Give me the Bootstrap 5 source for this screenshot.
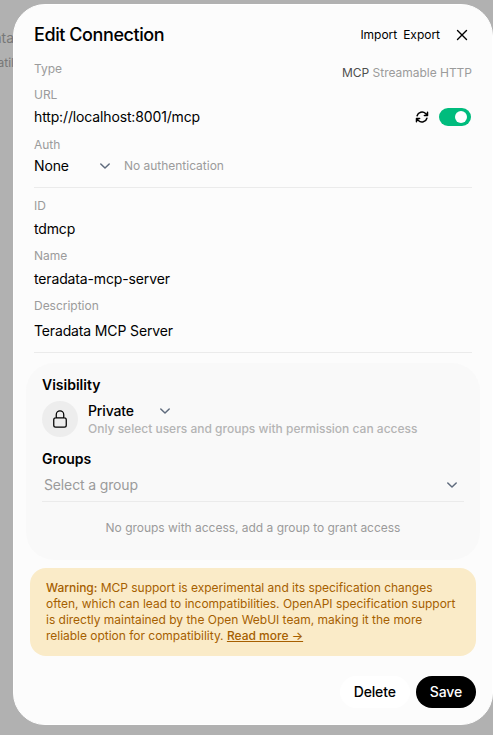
<!DOCTYPE html>
<html lang="en">
<head>
<meta charset="utf-8">
<meta name="viewport" content="width=device-width, initial-scale=1">
<title>Edit Connection</title>
<link href="https://cdn.jsdelivr.net/npm/bootstrap@5.3.0/dist/css/bootstrap.min.css" rel="stylesheet">
<style>
body{font-family:Inter,"Liberation Sans",sans-serif;font-size:14px;line-height:20px;letter-spacing:-.14px;color:#000;background:#b1b1b1;width:493px;height:735px}
svg{display:block;fill:none;stroke:currentColor;stroke-linecap:round;stroke-linejoin:round}
.behind{left:0;width:14px;color:#777;white-space:nowrap;direction:rtl;letter-spacing:0}
.behind-a{top:28px;font-size:14px}
.behind-b{top:53px;font-size:12px}
.dialog{margin:4px 0 0 13px;width:480px;height:721px;border:1px solid #fff;border-radius:32px;background:#fcfcfc}
.inner{padding:0 20px}
.head{padding-top:18px;height:56px}
.title{font-size:18px;line-height:24px;font-weight:500;letter-spacing:-.42px}
.txt12,.lbl{font-size:12px;line-height:16px;letter-spacing:-.02px}
.lbl{color:#9b9b9b}
.exp{margin-left:6px}
.dark{color:#4e4e4e}
.soft{color:#b4b4b4;letter-spacing:0}
.hair{height:1px;background:#ebebeb}
.arrow{color:#5f6b7d}
.toggle{width:32px;height:18px;background:#00bc7d;padding:3px 4px;margin-right:1px}
.knob{width:12px;height:12px}
.type-row{height:26px}
.url-row{height:27px}
.reload{margin-right:10px}
.auth-lbl{margin-top:7px}
.auth-row{margin-top:3px}
.none{width:90px;padding-right:13px}
.first-hair{margin-top:11px}
.fields{padding:10px 0 3px}
.field-gap{margin-top:9px}
.v1{margin-top:5px}
.v2{margin-top:7px}
.access{margin:10px 12px 0;height:197px;border-radius:28px;background:#f9f9f9;padding:12px 16px 0}
.strong14{font-weight:600;letter-spacing:0}
.who-row{margin-top:6px}
.who{margin-left:10px}
.who .arrow{margin-left:25px}
.lock{width:36px;height:36px;background:#ededed}
.groups{margin-top:12px}
.picker{height:29px;margin-top:3px;color:#9b9b9b;padding:0 6px 3px 2px}
.empty{margin-top:18px}
.warn{margin:8px 16px 0;padding:12px 16px;border-radius:16px;background:#faebc8;color:#a65f00}
.warn a{color:inherit;letter-spacing:0}
.actions{margin:20px 16px 0;gap:6px}
.pill{height:32px;font-size:14px;line-height:20px;font-weight:500;letter-spacing:-.14px;border:0;padding:6px 14px}
</style>
</head>
<body class="position-relative overflow-hidden">
<div class="behind behind-a position-absolute overflow-hidden">ata</div>
<div class="behind behind-b position-absolute overflow-hidden">atil</div>
<main class="dialog position-relative">
  <div class="inner">
    <header class="head d-flex justify-content-between">
      <h1 class="title mb-0">Edit Connection</h1>
      <div class="d-flex txt12 align-items-center align-self-start mt-1">
        <span>Import</span><span class="exp">Export</span>
        <svg class="ms-3 me-1" width="12" height="12" viewBox="0 0 12 12" stroke-width="1.4"><path d="M1.5 1.5l9 9M10.5 1.5l-9 9"/></svg>
      </div>
    </header>
    <div class="type-row d-flex justify-content-between txt12">
      <span class="lbl">Type</span>
      <span class="mt-1 lbl"><span class="dark">MCP</span> Streamable HTTP</span>
    </div>
    <div class="lbl">URL</div>
    <div class="d-flex align-items-center url-row">
      <span class="flex-grow-1">http://localhost:8001/mcp</span>
      <svg class="reload" width="14" height="14" viewBox="0 0 16 16" stroke-width="1.7"><path d="M10.7 6.2h3.6V2.6M1.7 13.4V9.8h3.6M2.4 6.6a5.8 5.8 0 0 1 9.7-2.6l2.2 2.2M13.6 9.4a5.8 5.8 0 0 1-9.7 2.6L1.7 9.8"/></svg>
      <span class="toggle rounded-pill d-flex justify-content-end"><span class="knob rounded-circle bg-white"></span></span>
    </div>
    <div class="lbl auth-lbl">Auth</div>
    <div class="d-flex align-items-center auth-row">
      <span class="none d-flex align-items-center justify-content-between">None <svg class="arrow" width="12" height="12" viewBox="0 0 12 12" stroke-width="1.5"><path d="M1.8 4l4.2 4 4.2-4"/></svg></span>
      <span class="lbl">No authentication</span>
    </div>
    <div class="hair first-hair"></div>
    <div class="fields">
      <div class="lbl">ID</div><div class="v1">tdmcp</div>
      <div class="lbl field-gap">Name</div><div class="v1">teradata-mcp-server</div>
      <div class="lbl field-gap">Description</div><div class="v2">Teradata MCP Server</div>
    </div>
    <div class="hair mt-2"></div>
  </div>
  <section class="access">
    <div class="strong14">Visibility</div>
    <div class="d-flex who-row">
      <span class="lock rounded-circle d-flex align-items-center justify-content-center"><svg width="20" height="20" viewBox="0 0 24 24" stroke-width="1.5"><path d="M16.5 10.5V6.75a4.5 4.5 0 1 0-9 0v3.75m-.75 11.25h10.5a2.25 2.25 0 0 0 2.25-2.25v-6.75a2.25 2.25 0 0 0-2.25-2.25H6.75a2.25 2.25 0 0 0-2.25 2.25v6.75a2.25 2.25 0 0 0 2.25 2.25z"/></svg></span>
      <div class="who">
        <div class="fw-medium d-flex align-items-center">Private <svg class="arrow" width="12" height="12" viewBox="0 0 12 12" stroke-width="1.5"><path d="M1.8 4l4.2 4 4.2-4"/></svg></div>
        <div class="lbl soft text-nowrap fw-medium">Only select users and groups with permission can access</div>
      </div>
    </div>
    <div class="strong14 groups">Groups</div>
    <div class="picker d-flex align-items-center justify-content-between">Select a group <svg class="arrow" width="12" height="12" viewBox="0 0 12 12" stroke-width="1.5"><path d="M1.8 4l4.2 4 4.2-4"/></svg></div>
    <div class="hair"></div>
    <div class="lbl text-center empty">No groups with access, add a group to grant access</div>
  </section>
  <div class="warn txt12"><span class="fw-medium">Warning:</span> MCP support is experimental and its specification changes often, which can lead to incompatibilities. OpenAPI specification support is directly maintained by the Open WebUI team, making it the more reliable option for compatibility. <a href="#" class="fw-medium">Read more →</a></div>
  <div class="actions d-flex justify-content-end">
    <button class="pill rounded-pill bg-white text-black">Delete</button>
    <button class="pill rounded-pill bg-black text-white">Save</button>
  </div>
</main>
<script src="https://cdn.jsdelivr.net/npm/bootstrap@5.3.0/dist/js/bootstrap.bundle.min.js"></script>
</body>
</html>
